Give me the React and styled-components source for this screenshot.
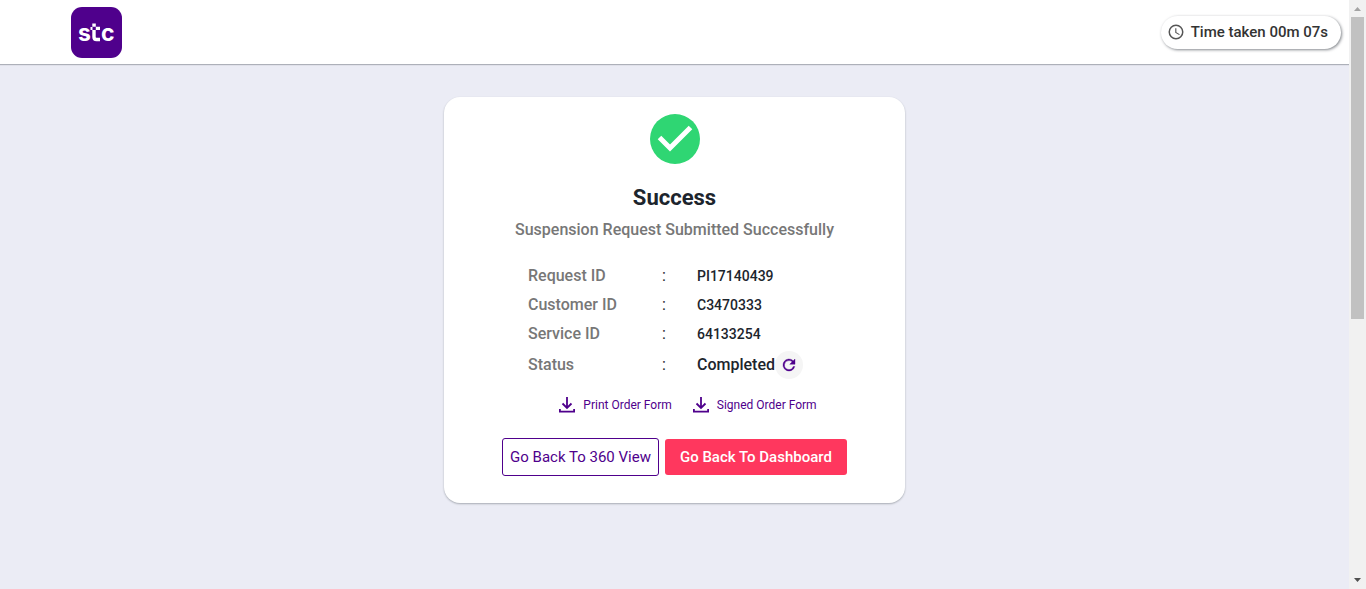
import React from 'react';
import styled, { createGlobalStyle, css } from 'styled-components';

const GlobalStyle = createGlobalStyle`
  *, *::before, *::after { box-sizing: border-box; }
  body {
    margin: 0;
    font-family: Roboto, "Noto Sans", sans-serif;
    font-size: 16px;
    color: #1d252d;
    background: #ebecf5;
  }
`;

const Shell = styled.div`
  display: grid;
  grid-template-columns: minmax(0, 1fr) 17px;
  min-height: 100vh;
`;

const Page = styled.div`
  display: flex;
  flex-direction: column;
`;

const Header = styled.header`
  display: flex;
  align-items: center;
  justify-content: space-between;
  height: 64px;
  padding: 0 8px 0 71px;
  background: #fff;
  box-shadow: 0 1px 1px rgba(29, 37, 45, 0.3);
`;

const LogoLink = styled.a`
  display: block;
  height: 51px;
`;

const Timer = styled.div`
  display: flex;
  align-items: center;
  gap: 6px;
  height: 33px;
  padding: 0 13px 0 6px;
  border-radius: 17px;
  background: #fff;
  font-size: 15px;
  font-weight: 500;
  line-height: 24px;
  white-space: nowrap;
  color: #333;
  box-shadow: 1px 1px 3px rgba(29, 37, 45, 0.55);
`;

const Main = styled.main`
  display: flex;
  justify-content: center;
  padding: 33px 16px;
`;

const Card = styled.section`
  display: flex;
  flex-direction: column;
  align-items: center;
  align-self: flex-start;
  width: 461px;
  padding: 17px 16px 27px;
  border-radius: 16px;
  background: #fff;
  box-shadow: 0 1px 2px rgba(29, 37, 45, 0.32);
`;

const Title = styled.h1`
  margin: 18px 0 0;
  font-size: 22px;
  line-height: 32px;
  font-weight: 700;
`;

const Subtitle = styled.p`
  margin: 4px 0 0;
  font-size: 16px;
  line-height: 24px;
  font-weight: 500;
  color: #777;
`;

const Details = styled.dl`
  display: flex;
  flex-direction: column;
  gap: 5px;
  width: 293px;
  margin: 22px 0 0;
  font-size: 16px;
  line-height: 24px;
  font-weight: 500;
`;

const DetailRow = styled.div`
  display: grid;
  grid-template-columns: 134px 35px 1fr;
  align-items: center;
`;

const Label = styled.dt`
  color: #777;
`;

const Colon = styled.span`
  font-weight: 400;
`;

const Value = styled.dd`
  display: flex;
  align-items: center;
  margin: 0;
  font-size: ${({ $numeric }) => ($numeric ? '14px' : '16px')};
`;

const RefreshButton = styled.button`
  display: grid;
  place-items: center;
  width: 28px;
  height: 28px;
  padding: 0;
  border: 0;
  border-radius: 50%;
  background: #f5f5f5;
  color: #4f008c;
  cursor: pointer;
`;

const Downloads = styled.div`
  display: flex;
  gap: 20px;
  margin: 16px 0 0 26px;
`;

const DownloadLink = styled.a`
  display: flex;
  align-items: center;
  gap: 7px;
  font-size: 12px;
  line-height: 20px;
  color: #4f008c;
  text-decoration: none;
`;

const Actions = styled.div`
  display: flex;
  align-items: center;
  gap: 6px;
  margin-top: 23px;
`;

const ActionButton = styled.button`
  border-radius: 3px;
  font-family: inherit;
  font-size: 15px;
  line-height: 24px;
  white-space: nowrap;
  cursor: pointer;
  ${({ $primary }) => $primary
    ? css`
        height: 36px;
        padding: 0 15px;
        border: 0;
        background: #ff375e;
        color: #fff;
        font-weight: 500;
      `
    : css`
        height: 38px;
        padding: 0 7px;
        border: 1px solid #4f008c;
        background: #fff;
        color: #4f008c;
        font-weight: 400;
      `}
`;

const ScrollTrack = styled.div`
  display: flex;
  flex-direction: column;
  align-items: center;
  height: 100vh;
  background: #f1f1f1;
`;

const ScrollArrow = styled.svg`
  flex: none;
  width: 17px;
  height: 17px;
`;

const ScrollThumb = styled.div`
  width: 13px;
  height: 302px;
  margin-bottom: auto;
  background: #c1c1c1;
`;

const Logo = () => (
  <svg width="51" height="51" viewBox="0 0 51 51" role="img" aria-label="stc">
    <rect width="51" height="51" rx="11" fill="#4f008c" />
    <g fill="#fff" fontFamily="Inter, sans-serif" fontWeight="700" fontSize="23">
      <text x="7" y="34">s</text>
      <text x="30" y="34">c</text>
    </g>
    <path d="M23 23v7q0 2.500 2.500 2.500h3.500" fill="none" stroke="#fff" strokeWidth="3.400" />
    <path d="M21.300 16.500h3.500v3.300h-3.500zM24.800 19.800h4.200v3.200h-4.200zM19.500 20h2v3h-2z" fill="#fff" />
  </svg>
);

const ClockIcon = () => (
  <svg width="18" height="18" viewBox="0 0 24 24" fill="#555" aria-hidden="true">
    <path d="M12 2a10 10 0 1 0 0 20 10 10 0 0 0 0-20zm0 18a8 8 0 1 1 0-16 8 8 0 0 1 0 16zm.5-13H11v6l5.250 3.150.75-1.230-4.500-2.670z" />
  </svg>
);

const SuccessIcon = () => (
  <svg width="50" height="50" viewBox="0 0 50 50" aria-hidden="true">
    <circle cx="25" cy="25" r="25" fill="#2fd673" />
    <path d="M9.500 23.500 20 34 40.500 13.500" fill="none" stroke="#fff" strokeWidth="5" />
  </svg>
);

const RefreshIcon = () => (
  <svg width="18" height="18" viewBox="0 0 24 24" fill="currentColor" stroke="currentColor" strokeWidth="0.500" aria-hidden="true">
    <path d="M17.650 6.350A8 8 0 1 0 19.730 14h-2.080A6 6 0 1 1 12 6c1.660 0 3.140.69 4.220 1.780L13 11h7V4z" />
  </svg>
);

const DownloadIcon = () => (
  <svg width="18" height="18" viewBox="0 0 18 18" fill="none" stroke="currentColor" strokeWidth="1.800" aria-hidden="true">
    <path d="M9 1v11M4.500 7.500 9 12 13.500 7.500M1.900 13v2.600h14.200V13" />
  </svg>
);

const details = [
  ['Request ID', 'PI17140439'],
  ['Customer ID', 'C3470333'],
  ['Service ID', '64133254'],
];

export default function App() {
  return (
    <>
      <GlobalStyle />
      <Shell>
        <Page>
          <Header>
            <LogoLink href="#" aria-label="stc home"><Logo /></LogoLink>
            <Timer><ClockIcon />Time taken 00m 07s</Timer>
          </Header>
          <Main>
            <Card>
              <SuccessIcon />
              <Title>Success</Title>
              <Subtitle>Suspension Request Submitted Successfully</Subtitle>
              <Details>
                {details.map(([label, value]) => (
                  <DetailRow key={label}>
                    <Label>{label}</Label>
                    <Colon>:</Colon>
                    <Value $numeric>{value}</Value>
                  </DetailRow>
                ))}
                <DetailRow>
                  <Label>Status</Label>
                  <Colon>:</Colon>
                  <Value>
                    Completed
                    <RefreshButton type="button" aria-label="Refresh status"><RefreshIcon /></RefreshButton>
                  </Value>
                </DetailRow>
              </Details>
              <Downloads>
                <DownloadLink href="#"><DownloadIcon />Print Order Form</DownloadLink>
                <DownloadLink href="#"><DownloadIcon />Signed Order Form</DownloadLink>
              </Downloads>
              <Actions>
                <ActionButton type="button">Go Back To 360 View</ActionButton>
                <ActionButton type="button" $primary>Go Back To Dashboard</ActionButton>
              </Actions>
            </Card>
          </Main>
        </Page>
        <ScrollTrack aria-hidden="true">
          <ScrollArrow viewBox="0 0 17 17"><path d="M5 11h7L8.500 7z" fill="#a3a3a3" /></ScrollArrow>
          <ScrollThumb />
          <ScrollArrow viewBox="0 0 17 17"><path d="M5 6h7L8.500 10z" fill="#505050" /></ScrollArrow>
        </ScrollTrack>
      </Shell>
    </>
  );
}
